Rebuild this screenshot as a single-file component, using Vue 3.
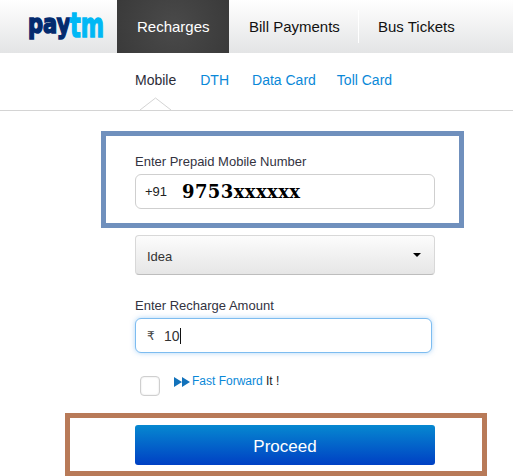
<script setup>
const tabs = [
  { label: 'Recharges', active: true },
  { label: 'Bill Payments' },
  { label: 'Bus Tickets' }
]
const subs = ['Mobile', 'DTH', 'Data Card', 'Toll Card']
</script>

<template>
  <div class="page">
    <header class="header">
      <div class="logo"><span class="pay">pay</span><span class="tm">tm</span></div>
      <nav class="tabs">
        <a v-for="t in tabs" :key="t.label" class="tab" :class="{ active: t.active }">{{ t.label }}</a>
      </nav>
    </header>

    <div class="subnav">
      <a v-for="(s, i) in subs" :key="s" class="sub" :class="{ current: i === 0 }">{{ s }}</a>
      <svg class="caret" width="34" height="14" viewBox="0 0 34 14">
        <path d="M1 13 L16.5 1 L32 13" fill="#fff" stroke="#d4d4d4" stroke-width="1" />
      </svg>
    </div>

    <section class="blue-box">
      <label class="label">Enter Prepaid Mobile Number</label>
      <div class="input phone">
        <span class="prefix">+91</span>
        <span class="number">9753xxxxxx</span>
      </div>
    </section>

    <div class="select">
      <span>Idea</span>
      <i class="arrow"></i>
    </div>

    <label class="label amount-label">Enter Recharge Amount</label>
    <div class="input amount">
      <span class="rupee">₹</span>
      <span class="value">10</span>
      <i class="cursor"></i>
    </div>

    <div class="ff">
      <span class="check"></span>
      <div class="ff-text">
        <svg class="ff-icon" width="16" height="10" viewBox="0 0 16 10">
          <path d="M0 0 L8 5 L0 10 Z M8 0 L16 5 L8 10 Z" fill="#1272bb" />
        </svg>
        <a class="ff-link">Fast Forward</a> <span class="ff-it">It !</span>
      </div>
    </div>

    <section class="brown-box">
      <button class="proceed">Proceed</button>
    </section>
  </div>
</template>

<style>
html, body { margin: 0; background: #fff; overflow: hidden; }
</style>

<style scoped>
.page {
  width: 513px;
  height: 476px;
  overflow: hidden;
  font-family: "Liberation Sans", Arial, sans-serif;
  color: #2c2c38;
  background: #fff;
}
.header {
  height: 53px;
  display: flex;
  background: linear-gradient(#ffffff, #e3e4e5);
}
.logo {
  width: 117px;
  box-sizing: border-box;
  display: flex;
  align-items: flex-start;
  padding: 9px 0 0 28px;
  font-family: "DejaVu Sans", sans-serif;
  font-weight: 700;
  line-height: 30px;
  white-space: nowrap;
}
.pay {
  width: 42px;
  font-size: 27px;
  color: #032b6e;
  -webkit-text-stroke: 1.6px #032b6e;
  transform: scaleX(0.78);
  transform-origin: left top;
}
.tm {
  width: 34px;
  margin-top: 2px;
  font-size: 33px;
  color: #00b8f5;
  -webkit-text-stroke: 1.4px #00b8f5;
  transform: scaleX(0.68);
  transform-origin: left top;
}
.tabs { display: flex; }
.tab {
  display: flex;
  align-items: center;
  box-sizing: border-box;
  font-size: 15px;
  color: #111;
  padding: 0 20px;
  position: relative;
  white-space: nowrap;
}
.tab:nth-child(2) { width: 130px; }
.tab:nth-child(2)::after {
  content: "";
  position: absolute;
  right: 0;
  top: 10px;
  height: 33px;
  width: 1px;
  background: #fff;
}
.tab:nth-child(3) { padding-left: 19px; }
.tab.active {
  width: 112px;
  background: radial-gradient(circle at center, #4a4a4a, #3a3a3a);
  color: #fff;
}
.subnav {
  position: relative;
  height: 58px;
  box-sizing: border-box;
  border-bottom: 1px solid #d4d4d4;
  display: flex;
  padding: 18px 0 0 135px;
  gap: 24px;
  font-size: 14px;
  line-height: 18px;
}
.sub { color: #0a88d8; }
.sub.current { color: #2c2c38; }
.sub:nth-child(3) { margin-left: -1px; }
.sub:nth-child(4) { margin-left: -3px; }
.caret { position: absolute; left: 139px; bottom: -1px; }
.blue-box {
  width: 363px;
  height: 97px;
  margin: 20px 0 0 101px;
  box-sizing: border-box;
  border: 5px solid #7090bd;
  padding: 18px 24px 0 29px;
}
.label {
  display: block;
  font-size: 13px;
  line-height: 15px;
  color: #33333f;
}
.input {
  display: flex;
  align-items: center;
  box-sizing: border-box;
  background: #fff;
}
.phone {
  margin-top: 5px;
  width: 300px;
  height: 35px;
  border: 1px solid #cfcfcf;
  border-radius: 6px;
  padding-left: 9px;
}
.prefix { font-size: 13px; color: #222; width: 37px; }
.number {
  font-family: "DejaVu Serif", serif;
  font-weight: 700;
  font-size: 18px;
  letter-spacing: 0.4px;
  color: #000;
}
.select {
  margin: 7px 0 0 135px;
  width: 300px;
  height: 40px;
  box-sizing: border-box;
  border: 1px solid #d8d8d8;
  border-bottom-color: #bdbdbd;
  border-radius: 4px;
  background: linear-gradient(#fcfcfc, #e6e6e6);
  display: flex;
  align-items: center;
  justify-content: space-between;
  padding: 2px 13px 0 11px;
  font-size: 13px;
  color: #333;
}
.arrow {
  width: 0;
  height: 0;
  border-left: 4px solid transparent;
  border-right: 4px solid transparent;
  border-top: 4px solid #000;
  margin-top: -3px;
}
.amount-label { margin: 23px 0 0 135px; }
.amount {
  margin: 5px 0 0 135px;
  width: 297px;
  height: 35px;
  border: 1px solid #7dbcf0;
  border-radius: 6px;
  box-shadow: 0 0 5px rgba(90, 170, 240, 0.5);
  padding-left: 11px;
  font-size: 14px;
}
.rupee { font-family: "DejaVu Sans", sans-serif; font-size: 12px; color: #444; width: 17px; }
.value { color: #333; }
.cursor { width: 1px; height: 16px; background: #111; }
.ff {
  display: flex;
  margin: 23px 0 0 140px;
  height: 20px;
}
.check {
  width: 20px;
  height: 20px;
  box-sizing: border-box;
  border: 1px solid #cfcfcf;
  border-radius: 4px;
  box-shadow: inset 0 0 2px #ddd;
}
.ff-text {
  margin: -1px 0 0 14px;
  font-size: 12px;
  line-height: 12px;
  white-space: nowrap;
}
.ff-icon { margin-right: 2px; vertical-align: -2px; }
.ff-link { color: #0a88d8; }
.ff-it { color: #222; }
.brown-box {
  width: 422px;
  height: 63px;
  margin: 17px 0 0 65px;
  box-sizing: border-box;
  border: 5px solid #b87a58;
  padding: 7px 0 0 65px;
}
.proceed {
  display: block;
  width: 300px;
  height: 40px;
  border: 0;
  border-radius: 3px;
  background: linear-gradient(#0688d0, #0040c4);
  color: #fff;
  font-family: inherit;
  font-size: 17px;
  padding: 3px 0 0;
}
</style>
